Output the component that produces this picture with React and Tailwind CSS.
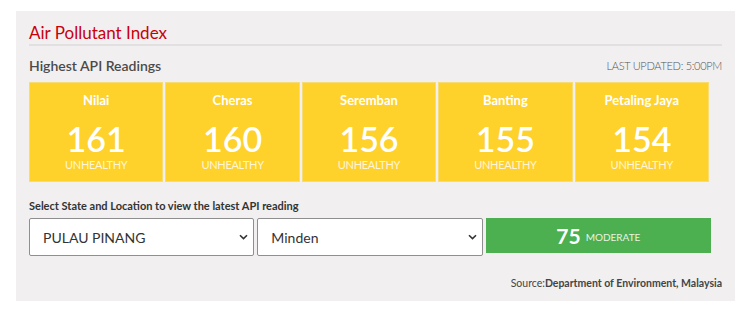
import React from 'react';

const readings = [
  { city: 'Nilai', api: 161, status: 'UNHEALTHY' },
  { city: 'Cheras', api: 160, status: 'UNHEALTHY' },
  { city: 'Seremban', api: 156, status: 'UNHEALTHY' },
  { city: 'Banting', api: 155, status: 'UNHEALTHY' },
  { city: 'Petaling Jaya', api: 154, status: 'UNHEALTHY' }
];

function Chevron() {
  return (
    <svg width="9" height="6" viewBox="0 0 9 6" className="absolute right-[6px] top-1/2 -translate-y-1/2 pointer-events-none">
      <path d="M1 1.2 L4.5 4.6 L8 1.2" fill="none" stroke="#333" strokeWidth="1.6" />
    </svg>
  );
}

function SelectBox({ value }) {
  return (
    <div className="relative">
      <select
        defaultValue={value}
        className="w-full h-[38px] appearance-none bg-white border border-[#8f8f8f] rounded-[2px] pl-[13px] text-[14px] text-[#333] outline-none"
      >
        <option>{value}</option>
      </select>
      <Chevron />
    </div>
  );
}

function ReadingCard({ reading }) {
  return (
    <div className="bg-[#ffd12b] border border-[#f7dc73] h-[100px] flex flex-col items-center text-white">
      <div className="mt-[8px] text-[13px] font-bold leading-[18px]">{reading.city}</div>
      <div className="mt-[12px] text-[34px] font-semibold leading-[36px]">{reading.api}</div>
      <div className="mt-[1px] text-[11px] leading-[13px] text-[#fff6d8] tracking-[-0.3px]">{reading.status}</div>
    </div>
  );
}

export default function App() {
  return (
    <div className="bg-white w-[743px] h-[320px] pt-[11px] pl-[16px]" style={{ fontFamily: 'Lato, "Open Sans", sans-serif' }}>
      <div className="w-[719px] h-[290px] bg-[#f1eff0] px-[13px] pt-[12px]">
        <h1 className="text-[17px] leading-[20px] text-[#c8000a] pb-[1px] border-b-2 border-[#e2e0e1]">
          Air Pollutant Index
        </h1>

        <div className="flex items-end justify-between mt-[11px] mb-[7px]">
          <h2 className="text-[14px] leading-[18px] font-semibold text-[#4a4a4a]">Highest API Readings</h2>
          <span className="text-[11px] leading-[14px] font-light text-[#555] tracking-[-0.3px] mb-[2px]">LAST UPDATED: 5:00PM</span>
        </div>

        <div className="grid grid-cols-5 gap-[2px] w-[680px]">
          {readings.map(r => (
            <ReadingCard key={r.city} reading={r} />
          ))}
        </div>

        <div className="mt-[17px] text-[11px] leading-[14px] font-bold text-[#333]">
          Select State and Location to view the latest API reading
        </div>

        <div className="grid grid-cols-3 items-start gap-[3px] w-[682px] mt-[5px]">
          <SelectBox value="PULAU PINANG" />
          <SelectBox value="Minden" />
          <div className="bg-[#4caf50] h-[35px] flex items-center justify-center text-white">
            <span className="text-[21px] font-bold leading-none">75</span>
            <span className="text-[10px] ml-[5px] mt-[3px] text-[#e6f5e6]">MODERATE</span>
          </div>
        </div>

        <div className="mt-[20px] text-right text-[10.5px] leading-[14px] text-[#444]">
          Source:<span className="font-bold">Department of Environment, Malaysia</span>
        </div>
      </div>
    </div>
  );
}
